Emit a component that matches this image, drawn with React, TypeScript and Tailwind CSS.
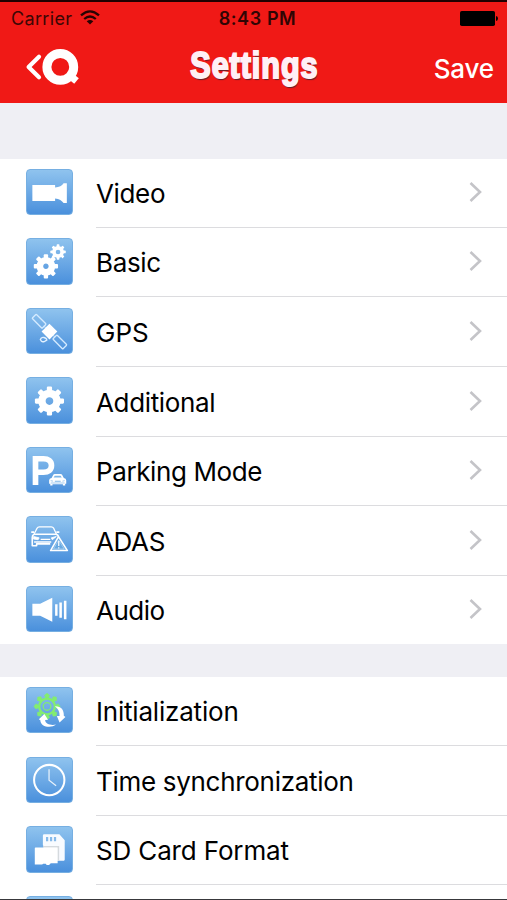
import React from "react";

type Row = { label: string; icon: React.ReactNode; tracking?: string };

const Gear = ({ cx, cy, r, hole }: { cx: number; cy: number; r: number; hole: number }) => {
  const body = r * 0.77;
  return (
    <g transform={`translate(${cx} ${cy})`}>
      <circle r={(body + hole) / 2} fill="none" stroke="#fff" strokeWidth={body - hole} />
      {[0, 45, 90, 135, 180, 225, 270, 315].map((angle) => (
        <rect
          key={angle}
          x={-r * 0.18}
          y={-r}
          width={r * 0.36}
          height={r * 0.4}
          rx={r * 0.08}
          fill="#fff"
          transform={`rotate(${angle})`}
        />
      ))}
    </g>
  );
};

const VideoIcon = () => (
  <path d="M6.3 15.9H28.8V18.2C33 18 35.5 16.5 37.2 14H40.4V33.7H37.2C35.5 31.5 33 29.6 28.8 29.2V31.7H6.3Z" fill="#fff" />
);

const BasicIcon = () => (
  <>
    <Gear cx={19.7} cy={28} r={12} hole={2.7} />
    <Gear cx={31.7} cy={13.8} r={7.6} hole={2.3} />
  </>
);

const GpsIcon = () => (
  <g transform="translate(23.2 23.3) rotate(45)">
    <g fill="none" stroke="#d5ebff" strokeWidth="1.3">
      <rect x="-21.5" y="-2.9" width="14" height="5.8" rx="0.8" />
      <rect x="7.5" y="-2.9" width="14" height="5.8" rx="0.8" />
      <path d="M-8 0H-5M5 0H8" strokeOpacity=".5" />
    </g>
    <rect x="-5.5" y="-5.5" width="11" height="11" fill="#fff" />
    <g transform="rotate(-45) translate(-5.8 7.5)" fill="none" stroke="#e2f1ff" strokeWidth="1.3">
      <path d="M-3.2 .4Q-2.5 -2.2 .3 -1.6T3.2 1L1 2.2Q-1 3.2 -2.3 1.8Z" />
    </g>
  </g>
);

const ParkingIcon = () => (
  <>
    <path d="M9.4 37.6V11.6H17.3C22.1 11.6 25.2 13.8 25.2 18.2S22.1 25 17.3 25H9.4" fill="none" stroke="#fff" strokeWidth="5.6" />
    <path d="M25.3 30.7L27 27.5Q27.4 26.8 28.4 26.8H34.2Q35.2 26.8 35.7 27.5L37.4 30.7Q39.8 31.1 39.8 33V36.4H38.8V38.2H36.5V36.8H26.2V38.2H24V36.4H22.9V33Q22.9 31.1 25.3 30.7Z" fill="#fff" />
    <path d="M27.3 30.2L28.5 28.4H34.2L35.4 30.2ZM28.5 33.4H34.3V34.4H28.5Z" fill="#7db6e8" />
    <path d="M24.4 33.3L26.8 33.8M38.3 33.3L36 33.8M24.5 35.6H38.2" stroke="#7db6e8" strokeWidth=".7" />
  </>
);

const AdasIcon = () => (
  <g fill="none" stroke="#fff" strokeLinejoin="round">
    <path d="M8 17.8L11 12Q11.6 10.7 13.2 10.7H25Q26.6 10.7 27.3 12L30 17.8" strokeWidth="1.2" />
    <path d="M5.2 16H8M30 16H33" strokeWidth="1.7" />
    <path d="M8 18H30Q32.3 19 32 21M8 18Q6 19 6.2 21.2V29.4H10.5V27.6H24" strokeWidth="1.6" />
    <path d="M7.5 20.3L13 21.6L12 23.5L7.4 22.8ZM30 20.3L25 21.6L26 23.5Z" fill="#fff" strokeWidth=".8" />
    <path d="M14.5 23.2H24M8 25.7H25" strokeWidth="1.3" />
    <path d="M32.2 20.5L24.3 34.2H41Z" fill="#68a9e2" strokeWidth="1.5" />
    <path d="M32.3 23.8L27.2 32.6H37.8Z" strokeWidth=".6" strokeOpacity=".6" />
    <path d="M32.4 24.8V29.6M32.4 30.8V32.2" strokeWidth="1.2" />
  </g>
);

const AudioIcon = () => (
  <path d="M6.3 17.5H14L26 11.5V35.3L14 29.4H6.3ZM28.8 18H31.2V29.5H28.8ZM33 16.4H35.5V31.5H33ZM37.5 14.7H40V33H37.5Z" fill="#fff" />
);

const InitIcon = () => (
  <>
    <g transform="translate(20.8 19.2)" stroke="#83ed70" fill="#83ed70">
      <circle r="7.8" fill="none" strokeWidth="2.3" />
      <circle r="3.8" fill="none" strokeWidth="1.3" />
      {[0, 45, 90, 135, 180, 225, 270, 315].map((angle) => (
        <path key={angle} d="M-1 -8L-2.6 -11L0 -13L2.6 -11L1 -8Z" strokeWidth=".5" transform={`rotate(${angle})`} />
      ))}
    </g>
    <path d="M28.5 19C34.5 18.7 37.8 22.5 37.4 28.5L39 29.8L33.2 35L30.5 28.8L33.2 28.6C33.4 24.5 32 21.7 28.5 19Z" fill="#fff" />
    <path d="M29.7 37.2C24.5 41.2 14.2 39.5 14.2 32.8L12.7 31.8L18.2 26.8L21.8 32.5L18.9 32.7C19.2 37 24.8 38.2 29.7 37.2Z" fill="#fff" />
  </>
);

const ClockIcon = () => (
  <g fill="none" stroke="#fff">
    <circle cx="23" cy="22.8" r="15" strokeWidth="2" />
    <path d="M22.8 12V23L29.8 28.5" strokeWidth="1.2" strokeOpacity=".85" />
  </g>
);

const SdIcon = () => (
  <>
    <path d="M18 8.2H33L38.3 14V33.5Q38.3 34.3 37.5 34.3H17.5V20L16.7 19V9.5Q16.7 8.2 18 8.2Z" fill="#f8fbff" />
    <path d="M19.8 11H22V15H19.8ZM23.7 11H25.9V15H23.7ZM27.6 11H29.8V15H27.6Z" fill="#86baea" />
    <path d="M17 19.9H32.8V34.3H30.8V21.5H17Z" fill="#d5dade" />
    <path d="M9.4 21.2H31.3V36.8H24.5L22.8 38.5H20.5L19.5 37.4H17L16 38.2H8.7V22Q8.7 21.2 9.4 21.2Z" fill="#fff" />
  </>
);

const settings: Row[] = [
  { label: "Video", icon: <VideoIcon /> },
  { label: "Basic", icon: <BasicIcon /> },
  { label: "GPS", icon: <GpsIcon />, tracking: "tracking-[0px]" },
  { label: "Additional", icon: <Gear cx={23.2} cy={23.8} r={14.4} hole={3.8} /> },
  { label: "Parking Mode", icon: <ParkingIcon />, tracking: "tracking-[-0.4px]" },
  { label: "ADAS", icon: <AdasIcon /> },
  { label: "Audio", icon: <AudioIcon />, tracking: "tracking-[-0.5px]" },
];

const actions: Row[] = [
  { label: "Initialization", icon: <InitIcon />, tracking: "tracking-[-0.2px]" },
  { label: "Time synchronization", icon: <ClockIcon />, tracking: "tracking-[-0.3px]" },
  { label: "SD Card Format", icon: <SdIcon />, tracking: "tracking-[-0.15px]" },
  { label: "", icon: null },
];

const Tile = ({ children }: { children?: React.ReactNode }) => (
  <div className="mt-[9.7px] h-[46.5px] w-[46.5px] shrink-0 rounded-[4px] border border-[#76afe2] bg-linear-to-b from-[#8fc3ee] to-[#4a90dc]">
    <svg viewBox="0 0 46 46" className="-m-px h-[46.5px] w-[46.5px] max-w-none">{children}</svg>
  </div>
);

const SettingsRow = ({ row, chevron, last }: { row: Row; chevron?: boolean; last?: boolean }) => (
  <div className="flex h-[69.55px] shrink-0 pl-[26px]">
    <Tile>{row.icon}</Tile>
    <div className={`ml-[23.5px] flex h-[68.9px] flex-1 items-center justify-between border-b pr-[25px] ${last ? "border-transparent" : "border-[#dcdcdf]"}`}>
      <span className={`pt-[2px] text-[26px] leading-none text-black ${row.tracking ?? "tracking-[-0.35px]"}`}>{row.label}</span>
      {chevron && (
        <svg viewBox="0 0 13 20" className="mb-0.5 h-5 w-[13px]" fill="none" stroke="#c4c4c8" strokeWidth="2.6">
          <path d="M1.5 1L11 10L1.5 19" />
        </svg>
      )}
    </div>
  </div>
);

const Header = () => (
  <header className="h-[102.5px] shrink-0 border-t-2 border-[#200000] bg-[#f01916]">
    <div className="grid h-8 grid-cols-3 items-center pl-[11px] pr-[9px]">
      <div className="flex items-center gap-[8px] text-[18px] tracking-[0.35px] text-[#3c0705]">
        <span>Carrier</span>
        <svg viewBox="0 0 20 15" className="mb-0.5 h-[15px] w-5" fill="none" stroke="#280302" strokeWidth="2.3">
          <path d="M1 5.4Q10 -2.6 19 5.4M4.2 9Q10 4 15.8 9" />
          <path d="M6.7 11.2Q10 8.7 13.3 11.2L10 14.5Z" fill="#280302" stroke="none" />
        </svg>
      </div>
      <span className="whitespace-nowrap pl-1.5 text-center text-[18px] font-semibold tracking-[0.6px] text-[#300504]">8:43 PM</span>
      <svg viewBox="0 0 38 15" className="h-[15px] w-[38px] justify-self-end">
        <rect width="35" height="15" rx="1.8" />
        <path d="M36 5Q38 5.3 38 7.5T36 10Z" />
      </svg>
    </div>
    <div className="grid h-[67px] grid-cols-[1fr_auto_1fr] items-center pl-[25px] pr-[24px]">
      <svg viewBox="0 0 56 38" className="mb-0.5 h-[38px] w-14" fill="none" stroke="#fff">
        <path d="M14 8.7L3.6 19L14 29.3" strokeWidth="4.2" strokeLinecap="round" strokeLinejoin="round" />
        <circle cx="35.3" cy="18.9" r="13.4" strokeWidth="9" />
        <path d="M43 26L51.5 33" strokeWidth="7.2" strokeLinejoin="round" />
      </svg>
      <h1 className="mb-[3px] scale-x-[.85] whitespace-nowrap font-['Liberation_Sans'] text-[36px] font-bold leading-none tracking-[1.1px] text-[#fff0f6] [-webkit-text-stroke:2px_#fff0f6] [text-shadow:1px_2px_1px_#64202a]">
        Settings
      </h1>
      <span className="-mr-[11px] mt-px justify-self-end text-[26px] font-medium tracking-[-0.15px] text-white">Save</span>
    </div>
  </header>
);

const App = () => (
  <div className="flex h-[900px] w-[507px] flex-col overflow-hidden border-b border-[#38383b] bg-[#efeff4] font-[Inter,sans-serif]">
    <Header />
    <main className="flex flex-col pt-[56.5px]">
      <section className="flex h-[485px] shrink-0 flex-col bg-white">
        {settings.map((row, i) => (
          <SettingsRow key={row.label} row={row} chevron last={i === settings.length - 1} />
        ))}
      </section>
      <section className="mt-[33.3px] flex flex-col bg-white">
        {actions.map((row) => (
          <SettingsRow key={row.label} row={row} />
        ))}
      </section>
    </main>
  </div>
);

export default App;
